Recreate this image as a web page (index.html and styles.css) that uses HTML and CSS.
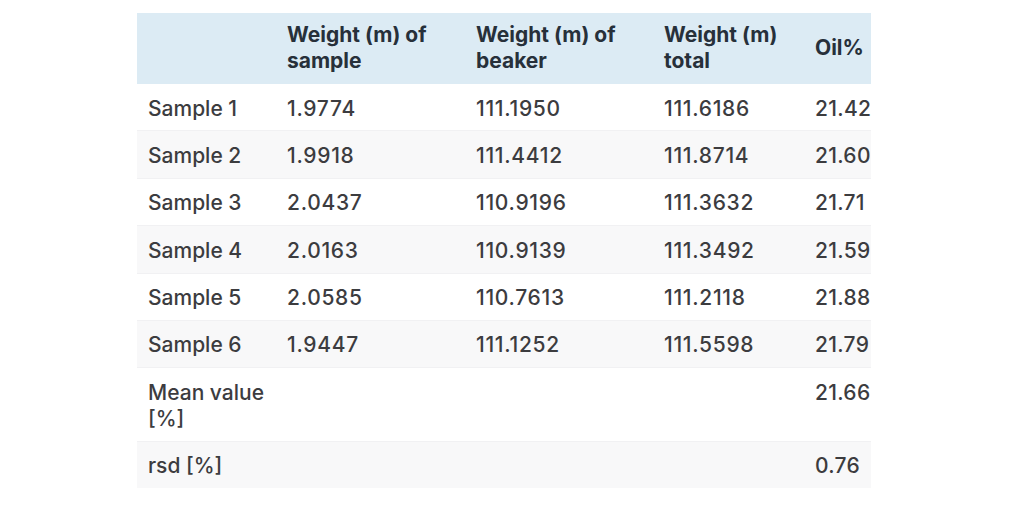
FILE: index.html
```html
<!DOCTYPE html>
<html lang="en">
<head>
<meta charset="utf-8">
<title>Oil content</title>
<link rel="stylesheet" href="styles.css">
</head>
<body>
<div class="page">
  <div class="scroller">
    <table class="data">
      <colgroup>
        <col class="c1"><col class="c2"><col class="c3"><col class="c4"><col class="c5">
      </colgroup>
      <thead>
        <tr>
          <th></th>
          <th>Weight (m) of sample</th>
          <th>Weight (m) of beaker</th>
          <th>Weight (m) total</th>
          <th>Oil%</th>
        </tr>
      </thead>
      <tbody>
        <tr><td>Sample 1</td><td>1.9774</td><td>111.1950</td><td>111.6186</td><td>21.42</td></tr>
        <tr><td>Sample 2</td><td>1.9918</td><td>111.4412</td><td>111.8714</td><td>21.60</td></tr>
        <tr><td>Sample 3</td><td>2.0437</td><td>110.9196</td><td>111.3632</td><td>21.71</td></tr>
        <tr><td>Sample 4</td><td>2.0163</td><td>110.9139</td><td>111.3492</td><td>21.59</td></tr>
        <tr><td>Sample 5</td><td>2.0585</td><td>110.7613</td><td>111.2118</td><td>21.88</td></tr>
        <tr><td>Sample 6</td><td>1.9447</td><td>111.1252</td><td>111.5598</td><td>21.79</td></tr>
        <tr><td>Mean value [%]</td><td></td><td></td><td></td><td>21.66</td></tr>
        <tr><td>rsd [%]</td><td></td><td></td><td></td><td>0.76</td></tr>
      </tbody>
    </table>
  </div>
</div>
</body>
</html>
```
FILE: styles.css
```css
html, body {
  margin: 0;
  padding: 0;
  background: #ffffff;
}

.page {
  padding: 13px 0 0 137px;
  font-family: Inter, "Noto Sans", "Liberation Sans", sans-serif;
}

.scroller {
  width: 734px;
  overflow: hidden;
}

.data {
  border-collapse: collapse;
  table-layout: fixed;
  width: 760px;
  font-size: 21px;
  line-height: 26px;
  color: #3c3c3f;
}

.c1 { width: 139px; }
.c2 { width: 189px; }
.c3 { width: 188px; }
.c4 { width: 151px; }
.c5 { width: 93px; }

.data th,
.data td {
  padding: 11.5px 11px 8.9px;
  text-align: left;
  vertical-align: top;
}

.data th {
  background: #dcebf4;
  color: #27303a;
  font-size: 21px;
  font-weight: 700;
  vertical-align: middle;
  padding-top: 9px;
  padding-bottom: 10px;
}

.data td {
  font-weight: 500;
  border-bottom: 1px solid #f1f1f3;
}

.data td + td {
  letter-spacing: 0.7px;
}

.data td:last-child {
  letter-spacing: 0.3px;
}

.data tbody tr:nth-child(even) td {
  background: #f8f8f9;
}

.data tbody tr:last-child td {
  border-bottom: none;
}
```
